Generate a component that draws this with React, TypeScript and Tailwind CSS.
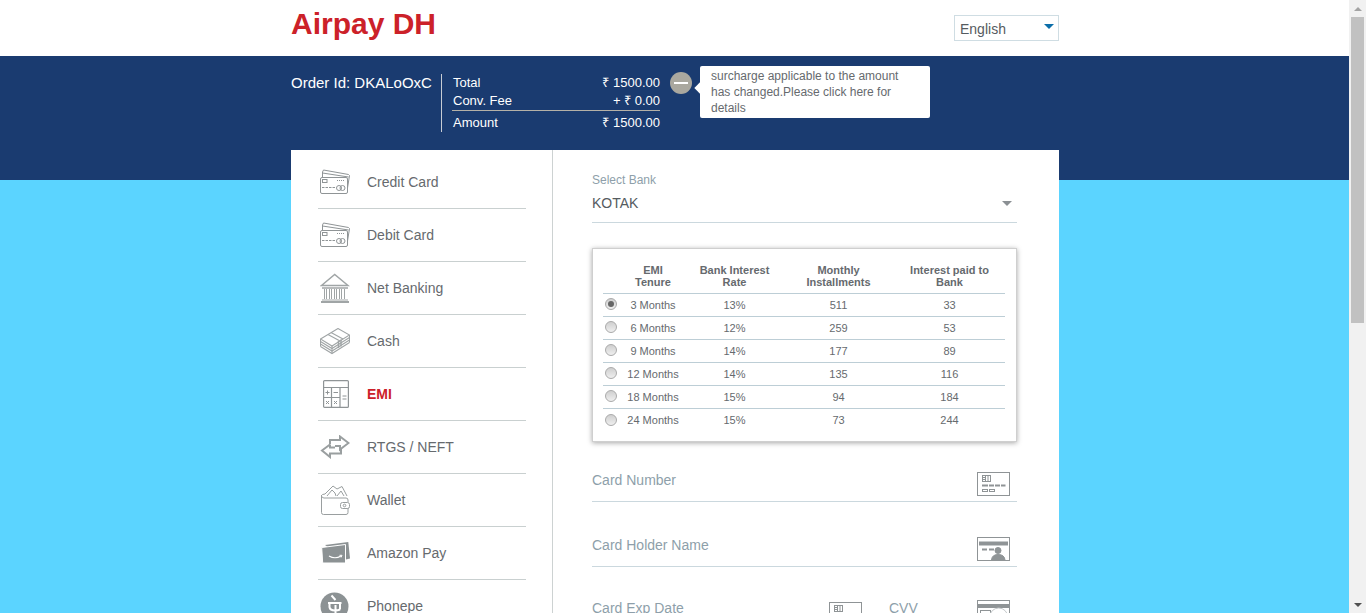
import React from "react"

const emiRows = [
  ["3 Months", "13%", "511", "33"],
  ["6 Months", "12%", "259", "53"],
  ["9 Months", "14%", "177", "89"],
  ["12 Months", "14%", "135", "116"],
  ["18 Months", "15%", "94", "184"],
  ["24 Months", "15%", "73", "244"],
]

function CardsIcon() {
  return (
    <svg width="30" height="26" viewBox="0 0 30 26" fill="none" stroke="#8f9496" strokeWidth="1">
      <path d="M2.5 8V3L3.5 1L28.5 5.5L29.5 6.5L27.5 19" />
      <path d="M2.5 4L28.5 8" />
      <rect x="0.5" y="8.5" width="27" height="16" rx="1.5" />
      <rect x="2.5" y="10.5" width="4.5" height="3" />
      <path d="M17 11.5h8" strokeDasharray="1 1" />
      <path d="M2 18.5h14" strokeDasharray="2.5 1" />
      <circle cx="19" cy="19" r="2.5" />
      <circle cx="22.5" cy="19" r="2.5" />
    </svg>
  )
}

function BankIcon() {
  return (
    <svg width="30" height="30" viewBox="0 0 30 30" fill="none" stroke="#a0a5a6" strokeWidth="1">
      <path d="M1.5 12.5L14.7 1.5L28 12.5Z" strokeWidth="1.5" />
      <path d="M2 15h26" strokeWidth="1.5" />
      <path d="M4.5 16v10M6.5 16v10M9.5 16v10M11.5 16v10M14.5 16v10M16.5 16v10M19.5 16v10M21.5 16v10M24.5 16v10" />
      <path d="M2 27h26" />
      <path d="M1 29h28" strokeWidth="2" />
    </svg>
  )
}

function CashIcon() {
  return (
    <svg width="30" height="27" viewBox="0 0 30 27" fill="none" stroke="#a0a5a6" strokeWidth="1.1">
      <path d="M0.5 11L18 0.5L29.5 7L12 18Z" />
      <path d="M0.5 13.5L12 20.5L29.5 9.5" />
      <path d="M0.5 16L12 23L29.5 12" />
      <path d="M0.5 18.5L12 25.5L29.5 14.5" />
      <path d="M0.5 11V18.5M12 18V25.5M29.5 7V14.5" />
      <path d="M18.5 13V20M21 11.5V18.5" strokeWidth="1.5" />
      <path d="M8 6.5L20 13M11 4.5L23 11" />
    </svg>
  )
}

function CalcIcon() {
  return (
    <svg className="ml-[3px]" width="26" height="28" viewBox="0 0 26 28" fill="none" stroke="#8f9496" strokeWidth="1.2">
      <rect x="0.6" y="0.6" width="24.8" height="26.8" rx="1" />
      <path d="M0.6 7.5h24.8M0.6 17.5h17M8.5 7.5V27.5M17 7.5V27.5" />
      <path d="M2.5 12.5h4M4.5 10.5v4M10.5 12.5h4.5M3 21l3 3M6 21l-3 3M11 24l3-3M11 21l3 3M19.5 16h4M19.5 19h4" strokeWidth="1" />
    </svg>
  )
}

function ArrowsIcon() {
  return (
    <svg width="30" height="24" viewBox="0 0 30 24" fill="none" stroke="#9a9fa0" strokeWidth="2">
      <path d="M10 9V5H20V1.5L28.5 8L20 14.5V11H15" />
      <path d="M10 9.5L2 15.5L10 22V18.5H21V14" />
      <path d="M10 9.5V12.5H15" />
    </svg>
  )
}

function WalletIcon() {
  return (
    <svg width="30" height="30" viewBox="0 0 30 30" fill="none" stroke="#9a9fa0" strokeWidth="1">
      <path d="M1 11Q2 9 5 9L8 6L13 1L17 4L22 1.5L27 11" />
      <path d="M7 11L12 5L15 8L16 11M17 11L21 6L24 11" />
      <path d="M1.5 11V27.5Q1.5 29.5 3.5 29.5H26Q28 29.5 28 27.5V23M1.5 11Q2 13 4 13H26Q28 13 28 15V17" />
      <rect x="20.5" y="17.5" width="9" height="6" rx="2" />
      <circle cx="24.5" cy="20.5" r="1.3" />
    </svg>
  )
}

function AmazonIcon() {
  return (
    <svg width="30" height="24" viewBox="0 0 30 24" fill="none">
      <path d="M5 4L28.3 1L30 17.5L26 18.5Z" fill="#8c9294" />
      <path d="M1.7 6.5L25.5 3.5V22H2.7Z" fill="#8c9294" stroke="#ffffff" strokeWidth="1" />
      <path d="M9 15Q15 18.5 21 15" stroke="#ffffff" strokeWidth="1.2" />
      <path d="M19.5 14.3L22 14.3L21 16.5" stroke="#ffffff" strokeWidth="1" />
    </svg>
  )
}

function PhonepeIcon() {
  return (
    <svg width="29" height="29" viewBox="0 0 29 29">
      <circle cx="14.5" cy="14.5" r="14" fill="#8c9294" />
      <path d="M8 11H21.5M9.5 11V15Q10 18.5 15 18.5Q18 18.5 20 17.5M20 11V17.5M15.5 13V24.5M11.5 3.5L15.5 8" fill="none" stroke="#ffffff" strokeWidth="2" />
    </svg>
  )
}

function CardNumberIcon() {
  return (
    <svg width="33" height="24" viewBox="0 0 33 24" fill="none" stroke="#8f9496" strokeWidth="1">
      <rect x="0.5" y="0.5" width="32" height="23" />
      <rect x="5.5" y="3.5" width="8" height="6" />
      <path d="M8.5 3.5v6M5.5 5.5h3M5.5 7.5h3M11 3.5v6" />
      <path d="M5 13.5h6M12 13.5h5M18 13.5h5M24 13.5h4.5" strokeWidth="2" />
      <rect x="5.5" y="17.5" width="5" height="2" />
      <rect x="12.5" y="17.5" width="5" height="2" />
    </svg>
  )
}

function CardHolderIcon() {
  return (
    <svg width="33" height="24" viewBox="0 0 33 24" fill="none" stroke="#8f9496" strokeWidth="1">
      <rect x="0.5" y="0.5" width="32" height="23" />
      <path d="M2 6.5h29" strokeWidth="4" />
      <path d="M5 12.5h5M12 12.5h5" strokeWidth="2" />
      <circle cx="21" cy="13.5" r="3" fill="#8f9496" />
      <path d="M14.5 23Q15 17.5 21 17.5Q27.5 17.5 28 23Z" fill="#8f9496" />
    </svg>
  )
}

function CvvIcon() {
  return (
    <svg width="33" height="24" viewBox="0 0 33 24" fill="none" stroke="#8f9496" strokeWidth="1">
      <rect x="0.5" y="0.5" width="32" height="23" />
      <path d="M1 6h31" strokeWidth="4" />
      <rect x="3.5" y="10.5" width="10" height="7" />
      <circle cx="21.7" cy="17" r="9" fill="#ffffff" stroke="#c4c8ca" />
    </svg>
  )
}

const menu = [
  { label: "Credit Card", icon: <CardsIcon /> },
  { label: "Debit Card", icon: <CardsIcon /> },
  { label: "Net Banking", icon: <BankIcon /> },
  { label: "Cash", icon: <CashIcon /> },
  { label: "EMI", icon: <CalcIcon />, active: true },
  { label: "RTGS / NEFT", icon: <ArrowsIcon /> },
  { label: "Wallet", icon: <WalletIcon /> },
  { label: "Amazon Pay", icon: <AmazonIcon /> },
  { label: "Phonepe", icon: <PhonepeIcon /> },
]

export default function App() {
  return (
    <div className="flex h-[613px] overflow-hidden font-['Liberation_Sans',Arial,sans-serif]">
      <div className="flex h-[613px] w-[1349px] flex-col overflow-hidden bg-[#5bd4ff]">
        <header className="h-[56px] shrink-0 bg-white">
          <div className="ml-[291px] flex w-[768px] items-start justify-between">
            <h1 className="mt-[7px] text-[30px] leading-[34px] font-bold text-[#cc2129]">Airpay DH</h1>
            <div className="mt-[15px] flex h-[26px] w-[105px] items-center justify-between border border-[#cfdde3] pr-[4px] pl-[5px] text-[14px] text-[#555b60]">
              <span className="mt-[3px]">English</span>
              <span className="mb-[3px] h-0 w-0 border-x-[5px] border-t-[5px] border-x-transparent border-t-[#0b6ea9]"></span>
            </div>
          </div>
        </header>

        <section className="h-[124px] shrink-0 bg-[#1a3b70]">
          <div className="ml-[291px] flex w-[768px] items-start pt-[18px] text-white">
            <div className="w-[150px] text-[15px] leading-[17px]">Order Id: DKALoOxC</div>
            <div className="h-[58px] w-px bg-[#c7ccd4]"></div>
            <div className="ml-[10px] w-[208px] text-[13px] leading-[18px]">
              <div className="flex justify-between pl-px">
                <span>Total</span>
                <span>₹ 1500.00</span>
              </div>
              <div className="flex h-[19px] justify-between border-b border-[#b5b1a7] pl-px">
                <span>Conv. Fee</span>
                <span>+ ₹ 0.00</span>
              </div>
              <div className="mt-[3px] flex justify-between pl-px">
                <span>Amount</span>
                <span>₹ 1500.00</span>
              </div>
            </div>
            <div className="mt-[-2px] ml-[10px] flex size-[22px] items-center justify-center rounded-full bg-[#aaa89f]">
              <span className="h-[2px] w-[14px] bg-white"></span>
            </div>
            <div className="relative mt-[-8px] ml-[8px] h-[52px] w-[230px] rounded-[2px] bg-white pt-[2px] pl-[11px] text-[12px] leading-[16px] text-[#666a6e]">
              <span className="absolute top-[18px] left-[-4px] size-[8px] rotate-45 bg-white"></span>
              <p className="relative">
                surcharge applicable to the amount
                <br />
                has changed.Please click here for
                <br />
                details
              </p>
            </div>
          </div>
        </section>

        <main className="-mt-[30px] ml-[291px] flex w-[768px] flex-1 bg-white">
          <nav className="w-[262px] shrink-0 border-r border-[#cdd2d2] pt-[6px] pr-[26px] pl-[27px]">
            {menu.map((item) => (
              <div key={item.label} className="flex h-[53px] shrink-0 items-center border-b border-[#c9d0d0]">
                <div className="flex w-[49px] shrink-0 items-center pl-[2px]">{item.icon}</div>
                <span className={item.active ? "text-[14px] font-bold text-[#cc2129]" : "text-[14px] text-[#666a6e]"}>
                  {item.label}
                </span>
              </div>
            ))}
          </nav>

          <div className="min-w-0 flex-1 pt-[23px] pr-[42px] pl-[39px]">
            <label className="block text-[12px] leading-[14px] text-[#8e9faa]">Select Bank</label>
            <div className="flex h-[36px] items-start justify-between border-b border-[#cbd8de] pt-[8px] pr-[5px] text-[14px] leading-[16px] text-[#555b60]">
              <span>KOTAK</span>
              <span className="mt-[6px] h-0 w-0 border-x-[5.5px] border-t-[5px] border-x-transparent border-t-[#8b9094]"></span>
            </div>

            <div className="mt-[25px] h-[194px] border border-[#cfcfcf] pt-[15px] pr-[11px] pl-[10px] shadow-[0_1px_5px_rgba(0,0,0,0.35)]">
              <div className="grid h-[30px] grid-cols-[20px_60px_103px_105px_114px] border-b border-[#bdced6] text-center text-[11px] leading-[12px] font-bold text-[#666a6e]">
                <span></span>
                <span>
                  EMI
                  <br />
                  Tenure
                </span>
                <span>
                  Bank Interest
                  <br />
                  Rate
                </span>
                <span>
                  Monthly
                  <br />
                  Installments
                </span>
                <span className="pl-[3px]">
                  Interest paid to
                  <br />
                  Bank
                </span>
              </div>
              {emiRows.map((row, i) => (
                <div
                  key={row[0]}
                  className="grid h-[23px] grid-cols-[20px_60px_103px_105px_114px] items-center border-b border-[#bdced6] text-center text-[11px] text-[#666a6e] last:border-b-0"
                >
                  <span className="ml-[2px] flex size-[12px] -translate-y-px items-center justify-center rounded-full border border-[#aaaaaa] bg-gradient-to-b from-[#cfcfcf] to-[#efefef]">
                    {i === 0 && <span className="size-[6px] rounded-full bg-[#666666]"></span>}
                  </span>
                  <span>{row[0]}</span>
                  <span>{row[1]}</span>
                  <span>{row[2]}</span>
                  <span className="pl-[3px]">{row[3]}</span>
                </div>
              ))}
            </div>

            <div className="mt-[24px] flex h-[36px] items-start justify-between border-b border-[#cbd8de] pt-[6px] pr-[7px] text-[14px] leading-[16px] text-[#8e9faa]">
              <span>Card Number</span>
              <CardNumberIcon />
            </div>
            <div className="mt-[29px] flex h-[36px] items-start justify-between border-b border-[#cbd8de] pt-[6px] pr-[7px] text-[14px] leading-[16px] text-[#8e9faa]">
              <span>Card Holder Name</span>
              <CardHolderIcon />
            </div>
            <div className="mt-[27px] flex items-start text-[14px] leading-[16px] text-[#8e9faa]">
              <div className="flex w-[270px] items-start justify-between pt-[6px]">
                <span>Card Exp Date</span>
                <span className="mt-[2px]">
                  <CardNumberIcon />
                </span>
              </div>
              <div className="ml-[27px] flex flex-1 items-start justify-between pt-[6px] pr-[7px]">
                <span>CVV</span>
                <CvvIcon />
              </div>
            </div>
          </div>
        </main>
      </div>

      <aside className="flex h-[613px] w-[17px] shrink-0 flex-col bg-[#f1f1f1]">
        <div className="flex h-[17px] shrink-0 items-center justify-center">
          <span className="h-0 w-0 border-x-[4px] border-b-[4px] border-x-transparent border-b-[#a3a3a3]"></span>
        </div>
        <div className="mx-[2px] h-[306px] shrink-0 bg-[#c1c1c1]"></div>
        <div className="flex-1"></div>
        <div className="flex h-[17px] shrink-0 items-center justify-center">
          <span className="h-0 w-0 border-x-[4px] border-t-[4px] border-x-transparent border-t-[#505050]"></span>
        </div>
      </aside>
    </div>
  )
}
